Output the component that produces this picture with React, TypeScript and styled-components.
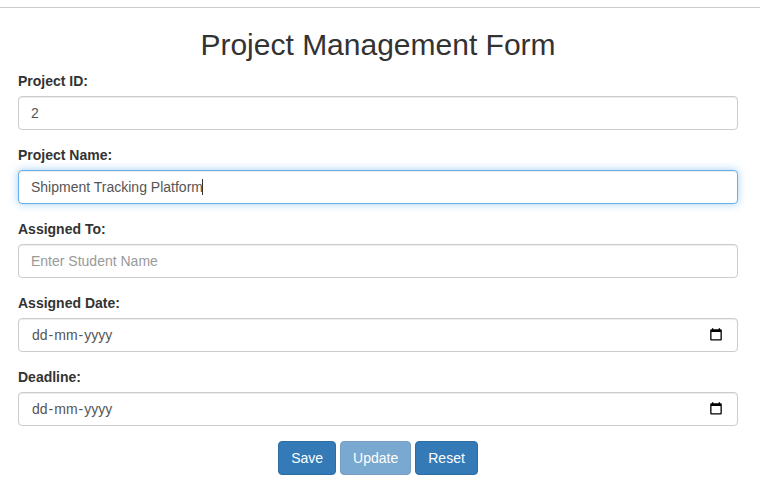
import React from "react";
import styled, { createGlobalStyle, css } from "styled-components";

const GlobalStyle = createGlobalStyle`
  *, *::before, *::after { box-sizing: border-box; }
  body {
    margin: 0;
    background: #fff;
    color: #333;
    font: 14px/20px "Liberation Sans", Arial, sans-serif;
  }
`;

const Page = styled.main`
  padding-top: 7px;
`;

const Panel = styled.section`
  border-top: 1px solid #ccc;
  padding: 20px 22px 0 18px;
`;

const Title = styled.h2`
  margin: 0 0 10px;
  font-size: 30px;
  font-weight: 500;
  line-height: 33px;
  text-align: center;
`;

const FormGroup = styled.div`
  margin-bottom: 15px;
`;

const Label = styled.label`
  display: block;
  margin-bottom: 5px;
  font-weight: 700;
`;

const controlStyle = css`
  width: 100%;
  height: 34px;
  padding: 6px 12px;
  border: 1px solid #ccc;
  border-radius: 4px;
  background: #fff;
  color: #555;
  font: inherit;
  box-shadow: inset 0 1px 1px rgba(0, 0, 0, 0.075);
`;

const TextInput = styled.input`
  ${controlStyle}
  display: block;
  outline: none;
  &::placeholder {
    color: #999;
    opacity: 1;
  }
`;

const EditingField = styled.div`
  ${controlStyle}
  display: flex;
  align-items: center;
  border-color: #66afe9;
  box-shadow: inset 0 1px 1px rgba(0, 0, 0, 0.075),
    0 0 8px rgba(102, 175, 233, 0.6);
`;

const Caret = styled.span`
  width: 1px;
  height: 16px;
  margin-left: -1px;
  background: #333;
`;

const DateField = styled.div`
  ${controlStyle}
  display: flex;
  align-items: center;
  justify-content: space-between;
  padding: 6px 15px 6px 13px;
`;

const DateParts = styled.span`
  display: flex;
  gap: 1px;
`;

const CalendarGlyph = styled.svg`
  display: block;
  margin-bottom: 1px;
`;

const Actions = styled.div`
  display: flex;
  justify-content: center;
  gap: 4px;
`;

const Button = styled.button`
  height: 34px;
  padding: 6px 12px;
  border: 1px solid #2e6da4;
  border-radius: 4px;
  background: #337ab7;
  color: #fff;
  font: inherit;
  &:disabled {
    opacity: 0.65;
  }
`;

function CalendarIcon() {
  return (
    <CalendarGlyph width="12" height="13" viewBox="0 0 12 13" fill="#000" aria-hidden="true">
      <path
        fillRule="evenodd"
        d="M2 .3h1.3v1h5.4v-1H10v1h.8q1 0 1 1v9.2q0 1-1 1H1.2q-1 0-1-1V2.3q0-1 1-1H2zM1.5 4.1v7.2h9V4.1z"
      />
    </CalendarGlyph>
  );
}

function DateInput() {
  return (
    <DateField>
      <DateParts>
        <span>dd</span>
        <span>-</span>
        <span>mm</span>
        <span>-</span>
        <span>yyyy</span>
      </DateParts>
      <CalendarIcon />
    </DateField>
  );
}

export default function App() {
  return (
    <Page>
      <GlobalStyle />
      <Panel>
        <Title>Project Management Form</Title>
        <FormGroup>
          <Label htmlFor="project-id">Project ID:</Label>
          <TextInput id="project-id" defaultValue="2" />
        </FormGroup>
        <FormGroup>
          <Label>Project Name:</Label>
          <EditingField>
            <span>Shipment Tracking Platform</span>
            <Caret />
          </EditingField>
        </FormGroup>
        <FormGroup>
          <Label htmlFor="assigned-to">Assigned To:</Label>
          <TextInput id="assigned-to" placeholder="Enter Student Name" />
        </FormGroup>
        <FormGroup>
          <Label>Assigned Date:</Label>
          <DateInput />
        </FormGroup>
        <FormGroup>
          <Label>Deadline:</Label>
          <DateInput />
        </FormGroup>
        <Actions>
          <Button>Save</Button>
          <Button disabled>Update</Button>
          <Button>Reset</Button>
        </Actions>
      </Panel>
    </Page>
  );
}
